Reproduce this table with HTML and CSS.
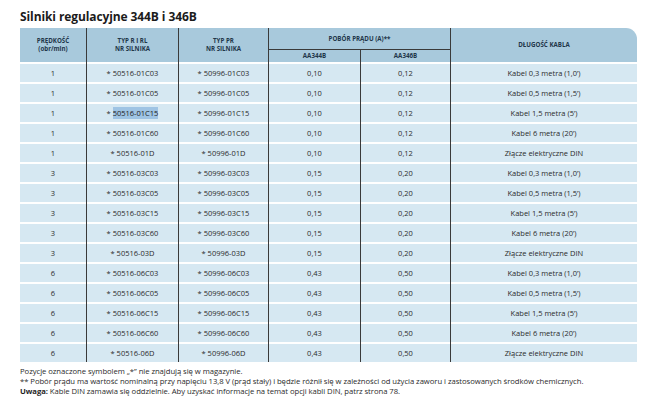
FILE: index.html
```html
<!DOCTYPE html>
<html lang="pl">
<head>
<meta charset="utf-8">
<link rel="stylesheet" href="styles.css">
</head>
<body>
<div class="page">
  <h1 class="title">Silniki regulacyjne 344B i 346B</h1>
  <table class="motors">
    <colgroup>
      <col class="c1"><col class="c2"><col class="c3"><col class="c4"><col class="c5"><col class="c6">
    </colgroup>
    <thead>
      <tr class="h1">
        <th rowspan="2" class="first">PRĘDKOŚĆ<br>(obr/min)</th>
        <th rowspan="2">TYP R I RL<br>NR SILNIKA</th>
        <th rowspan="2">TYP PR<br>NR SILNIKA</th>
        <th colspan="2" class="group">POBÓR PRĄDU (A)**</th>
        <th rowspan="2" class="last">DŁUGOŚĆ KABLA</th>
      </tr>
      <tr class="h2">
        <th>AA344B</th>
        <th>AA346B</th>
      </tr>
    </thead>
    <tbody>
      <tr><td class="first">1</td><td>* 50516-01C03</td><td>* 50996-01C03</td><td>0,10</td><td>0,12</td><td>Kabel 0,3 metra (1,0’)</td></tr>
      <tr><td class="first">1</td><td>* 50516-01C05</td><td>* 50996-01C05</td><td>0,10</td><td>0,12</td><td>Kabel 0,5 metra (1,5’)</td></tr>
      <tr><td class="first">1</td><td>* <span class="sel">50516-01C15</span></td><td>* 50996-01C15</td><td>0,10</td><td>0,12</td><td>Kabel 1,5 metra (5’)</td></tr>
      <tr><td class="first">1</td><td>* 50516-01C60</td><td>* 50996-01C60</td><td>0,10</td><td>0,12</td><td>Kabel 6 metra (20’)</td></tr>
      <tr><td class="first">1</td><td>* 50516-01D</td><td>* 50996-01D</td><td>0,10</td><td>0,12</td><td>Złącze elektryczne DIN</td></tr>
      <tr><td class="first">3</td><td>* 50516-03C03</td><td>* 50996-03C03</td><td>0,15</td><td>0,20</td><td>Kabel 0,3 metra (1,0’)</td></tr>
      <tr><td class="first">3</td><td>* 50516-03C05</td><td>* 50996-03C05</td><td>0,15</td><td>0,20</td><td>Kabel 0,5 metra (1,5’)</td></tr>
      <tr><td class="first">3</td><td>* 50516-03C15</td><td>* 50996-03C15</td><td>0,15</td><td>0,20</td><td>Kabel 1,5 metra (5’)</td></tr>
      <tr><td class="first">3</td><td>* 50516-03C60</td><td>* 50996-03C60</td><td>0,15</td><td>0,20</td><td>Kabel 6 metra (20’)</td></tr>
      <tr><td class="first">3</td><td>* 50516-03D</td><td>* 50996-03D</td><td>0,15</td><td>0,20</td><td>Złącze elektryczne DIN</td></tr>
      <tr><td class="first">6</td><td>* 50516-06C03</td><td>* 50996-06C03</td><td>0,43</td><td>0,50</td><td>Kabel 0,3 metra (1,0’)</td></tr>
      <tr><td class="first">6</td><td>* 50516-06C05</td><td>* 50996-06C05</td><td>0,43</td><td>0,50</td><td>Kabel 0,5 metra (1,5’)</td></tr>
      <tr><td class="first">6</td><td>* 50516-06C15</td><td>* 50996-06C15</td><td>0,43</td><td>0,50</td><td>Kabel 1,5 metra (5’)</td></tr>
      <tr><td class="first">6</td><td>* 50516-06C60</td><td>* 50996-06C60</td><td>0,43</td><td>0,50</td><td>Kabel 6 metra (20’)</td></tr>
      <tr><td class="first">6</td><td>* 50516-06D</td><td>* 50996-06D</td><td>0,43</td><td>0,50</td><td>Złącze elektryczne DIN</td></tr>
    </tbody>
  </table>
  <div class="notes">
    <p>Pozycje oznaczone symbolem „*” nie znajdują się w magazynie.</p>
    <p>** Pobór prądu ma wartość nominalną przy napięciu 13,8 V (prąd stały) i będzie różnił się w zależności od użycia zaworu i zastosowanych środków chemicznych.</p>
    <p><b>Uwaga:</b> Kable DIN zamawia się oddzielnie. Aby uzyskać informacje na temat opcji kabli DIN, patrz strona 78.</p>
  </div>
</div>
</body>
</html>
```
FILE: styles.css
```css
html, body {
  margin: 0;
  padding: 0;
  background: #ffffff;
}
.page {
  padding-left: 20px;
  font-family: "Open Sans", "Noto Sans", sans-serif;
  color: #2b2b2b;
}
.title {
  margin: 0;
  height: 28px;
  box-sizing: border-box;
  padding-top: 10px;
  font-size: 12px;
  line-height: 14px;
  font-weight: 700;
  color: #1b1b1b;
  letter-spacing: -0.1px;
}
.motors {
  width: 617px;
  table-layout: fixed;
  border-collapse: separate;
  border-spacing: 0;
}
.c1 { width: 66px; }
.c2 { width: 92px; }
.c3 { width: 90px; }
.c4 { width: 92px; }
.c5 { width: 90px; }
.c6 { width: 187px; }
.motors th {
  background: #a8c9dc;
  color: #22364a;
  font-size: 6.2px;
  line-height: 8px;
  font-weight: 700;
  padding: 0;
  text-align: center;
  vertical-align: middle;
  border-left: 1.5px solid #3a3a3a;
}
.motors th.first { border-left: none; }
.motors .h1 th { height: 22px; }
.motors .h1 th.group {
  border-bottom: 1px solid #3a3a3a;
  height: 21px;
}
.motors .h1 th.last { border-top-right-radius: 11px; }
.motors .h2 th { height: 12px; }
.motors td {
  background: #d6e8f2;
  box-shadow: inset 0 2px 0 #ffffff;
  border-left: 1.5px solid #3a3a3a;
  height: 18px;
  padding: 2px 0 0 0;
  font-size: 7.5px;
  line-height: 18px;
  text-align: center;
  white-space: nowrap;
  color: #2b2b2b;
}
.motors td.first { border-left: none; }
.sel {
  background: #9fc4e4;
  color: #222222;
  padding: 1px 0;
}
.notes {
  margin-top: 4px;
  font-size: 7.7px;
  line-height: 10px;
  color: #2b2b2b;
  letter-spacing: -0.05px;
}
.notes p { margin: 0; white-space: nowrap; }
.notes b { font-weight: 700; color: #1e1e1e; }
```
